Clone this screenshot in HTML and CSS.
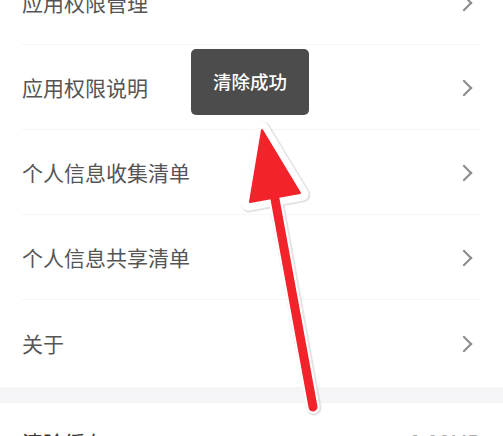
FILE: index.html
```html
<!DOCTYPE html>
<html lang="zh-CN">

<head>
    <meta charset="UTF-8">
    <title>设置</title>
    <link rel="stylesheet" href="styles.css">
</head>

<body>
    <div class="page">
        <ul class="menu">
            <li class="menu-item"><span>应用权限管理</span><i class="chevron"></i></li>
            <li class="menu-item"><span>应用权限说明</span><i class="chevron"></i></li>
            <li class="menu-item"><span>个人信息收集清单</span><i class="chevron"></i></li>
            <li class="menu-item"><span>个人信息共享清单</span><i class="chevron"></i></li>
            <li class="menu-item no-line"><span>关于</span><i class="chevron"></i></li>
        </ul>
        <div class="gap"></div>
        <ul class="menu">
            <li class="menu-item no-line cache"><span>清除缓存</span><span class="value">0.00MB</span></li>
        </ul>

        <!-- toast -->
        <div class="toast">清除成功</div>

        <!-- annotation arrow -->
        <svg class="arrow" width="503" height="436" viewBox="0 0 503 436">
            <g stroke="#c8c8c8" stroke-width="15" stroke-linecap="round" stroke-linejoin="round" fill="#c8c8c8" opacity="0.5">
                <line x1="276" y1="200" x2="314" y2="408" />
                <polygon points="263,129 249,205 303,195" />
            </g>
            <g stroke="#fff" stroke-width="13" stroke-linecap="round" stroke-linejoin="round" fill="#fff">
                <line x1="275" y1="199" x2="313" y2="407" />
                <polygon points="262,128 248,204 302,194" />
            </g>
            <g stroke="#f2232a" stroke-width="9" stroke-linecap="round" stroke-linejoin="round" fill="#f2232a">
                <line x1="275" y1="199" x2="313" y2="407" />
                <polygon points="262,130 250,202 300,193" stroke-width="2" />
            </g>
        </svg>
    </div>
</body>

</html>
```

FILE: styles.css
```css
/* Reset */
body,
ul {
    margin: 0;
    padding: 0;
}

body {
    background-color: #fff;
    font-family: "Noto Sans CJK SC", "Noto Sans", sans-serif;
    overflow: hidden;
}

.page {
    position: relative;
    width: 503px;
    height: 436px;
    overflow: hidden;
}

/* Menu list */
.menu {
    list-style: none;
}

.menu:first-child {
    margin-top: -40px;
}

.menu-item {
    box-sizing: border-box;
    display: flex;
    align-items: center;
    justify-content: space-between;
    height: 85px;
    margin: 0 22px;
    padding-bottom: 1px;
    border-bottom: 1px solid #f5f5f5;
    font-size: 21px;
    color: #555;
}

.menu-item.no-line {
    border-bottom: none;
    height: 87px;
}

.menu-item.cache {
    padding-bottom: 10px;
    color: #333;
}

.value {
    color: #aaa;
    font-size: 21px;
}

/* Right arrow */
.chevron {
    width: 10px;
    height: 10px;
    margin-right: 11px;
    margin-top: 2px;
    border-top: 2px solid #8c8c8c;
    border-right: 2px solid #8c8c8c;
    transform: rotate(45deg);
}

/* Grey separator */
.gap {
    height: 16px;
    background-color: #f5f5f7;
}

/* Toast */
.toast {
    position: absolute;
    left: 191px;
    top: 49px;
    width: 118px;
    height: 66px;
    display: flex;
    align-items: center;
    justify-content: center;
    padding-bottom: 2px;
    box-sizing: border-box;
    background-color: #4c4c4c;
    border-radius: 5px;
    color: #fff;
    font-size: 18.5px;
    font-weight: 500;
}

.arrow {
    position: absolute;
    left: 0;
    top: 0;
}
```
